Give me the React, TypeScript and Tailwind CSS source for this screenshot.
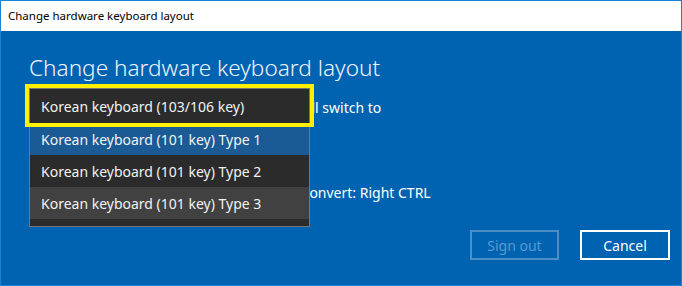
const items = [
  "Korean keyboard (101 key) Type 1",
  "Korean keyboard (101 key) Type 2",
  "Korean keyboard (101 key) Type 3",
];

function App() {
  return (
    <div
      className="w-[682px] h-[286px] flex flex-col border border-[#1883d7] bg-[#0063b1] overflow-hidden"
      style={{ fontFamily: '"Noto Sans", "Open Sans", sans-serif' }}
    >
      <div className="h-[30px] shrink-0 bg-white flex items-center pl-[7px] text-[11.5px] text-black">
        Change hardware keyboard layout
      </div>

      <div className="relative flex-1 flex flex-col bg-[#0063b1] pl-[28px] pr-[11px] pt-[20px] pb-[25px] text-white">
        <h1 className="text-[22.6px] font-light leading-[34px] text-[#eef4fa]">
          Change hardware keyboard layout
        </h1>
        <p className="mt-[13px] text-[14px] leading-[20px]">
          After you sign out, your keyboard layout will switch to
        </p>
        <p className="mt-[65px] text-[14px] leading-[20px]">
          Hangul/English: Right ALT, Hangul/Hanja Convert: Right CTRL
        </p>

        <div className="mt-auto flex justify-end gap-[21px]">
          <button className="w-[89px] h-[30px] border-2 border-[#4c8fc8] text-[14px] text-[#5a99cf]">
            Sign out
          </button>
          <button className="w-[90px] h-[30px] border-2 border-white text-[14px] text-white">
            Cancel
          </button>
        </div>

        {/* dropdown popup */}
        <div className="absolute left-[24px] top-[53px] w-[289px]">
          <div className="ml-[4px] w-[281px] mt-[4px] border border-[#777777] bg-[#2b2b2b] pb-[7px] text-[14px] text-[#f2f2f2]">
            <div className="h-[34px] flex items-center pl-[11px]">Korean keyboard (103/106 key)</div>
            {items.map((label, i) => (
              <div
                key={label}
                className={
                  "h-[32px] flex items-center pl-[11px] " +
                  (i === 0 ? "bg-[#1a5a95]" : i === 2 ? "bg-[#414141]" : "")
                }
              >
                {label}
              </div>
            ))}
          </div>
          <div className="absolute left-0 top-0 w-[289px] h-[43px] border-[4px] border-[#fff000]" />
        </div>
      </div>
    </div>
  );
}

export default App;
